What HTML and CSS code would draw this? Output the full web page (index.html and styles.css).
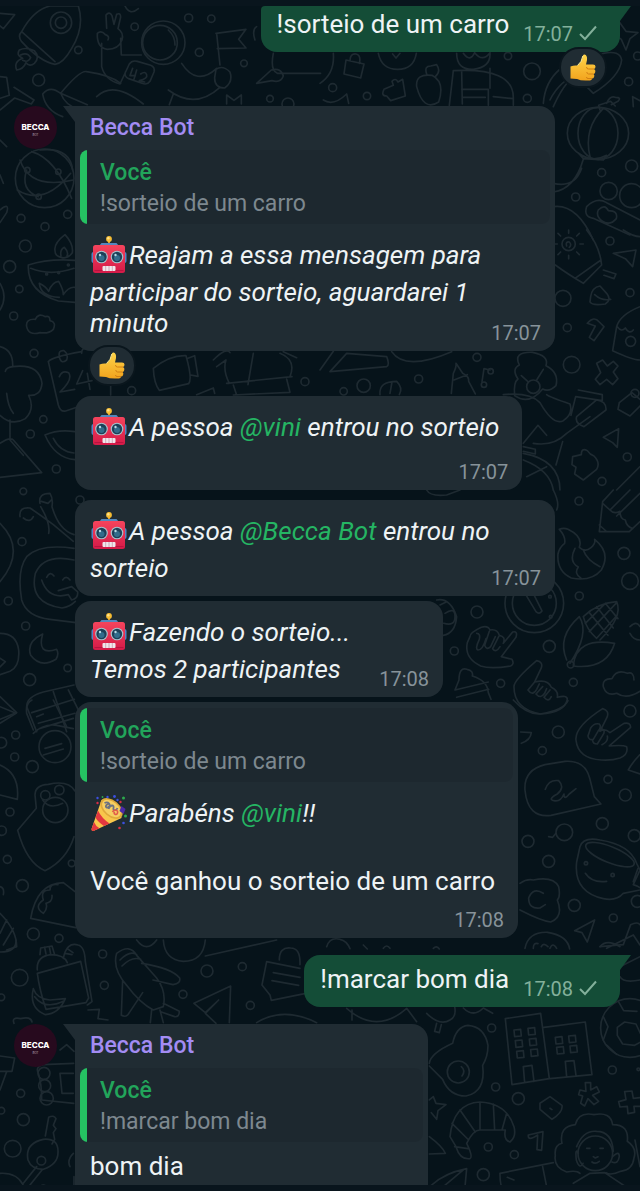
FILE: index.html
```html
<!DOCTYPE html>
<html lang="pt-BR">
	<head>
		<meta charset="utf-8" />
		<meta name="viewport" content="width=device-width, initial-scale=1">
		<title>Becca Bot</title>
		<link rel="stylesheet" href="styles.css">
	</head>
	<body>
		<!-- shared emoji -->
		<svg class="defs" aria-hidden="true">
			<defs>
				<linearGradient id="red" x1="0" y1="0" x2="0" y2="1">
					<stop offset="0" stop-color="#f5445c"/>
					<stop offset="1" stop-color="#d51a48"/>
				</linearGradient>
				<linearGradient id="skin" x1="0" y1="0" x2="0" y2="1">
					<stop offset="0" stop-color="#ffd54a"/>
					<stop offset="1" stop-color="#f2a31d"/>
				</linearGradient>
				<symbol id="robot" viewBox="0 0 38 40">
					<path d="M18.5 4v5" stroke="#d99a2b" stroke-width="2"/>
					<circle cx="18.5" cy="3" r="2.900" fill="#f7bd33"/>
					<circle cx="17.800" cy="2.200" r="1.200" fill="#ffe28a"/>
					<rect x="1" y="16" width="5" height="11" rx="2" fill="#4f83c4"/>
					<rect x="31" y="16" width="5" height="11" rx="2" fill="#4f83c4"/>
					<path d="M9 9.500l2-2.500h15l2 2.500z" fill="#5287bd"/>
					<rect x="2.500" y="9" width="32" height="28" rx="2.500" fill="url(#red)"/>
					<path d="M4 34.500h29" stroke="#b81440" stroke-width="1"/>
					<circle cx="11" cy="21" r="6.300" fill="#a9c3cd"/>
					<circle cx="11" cy="21" r="5.200" fill="#1d4058"/>
					<circle cx="11" cy="22" r="3" fill="#326c8b"/>
					<circle cx="9.500" cy="19" r="1.200" fill="#b9dbe6"/>
					<circle cx="26.500" cy="21" r="6.300" fill="#a9c3cd"/>
					<circle cx="26.500" cy="21" r="5.200" fill="#1d4058"/>
					<circle cx="26.500" cy="22" r="3" fill="#326c8b"/>
					<circle cx="25" cy="19" r="1.200" fill="#b9dbe6"/>
					<rect x="12" y="30" width="13" height="5" rx="1" fill="#f0e7ec"/>
					<path d="M15.200 30v5M18.500 30v5M21.800 30v5" stroke="#c79aad" stroke-width=".8"/>
				</symbol>
				<symbol id="party" viewBox="0 0 38 40">
					<path d="M1 35L11 6C15 3 32 16 31 24L4 36.500Q1 38 1 35z" fill="#f8c64b"/>
					<path d="M7.500 16.500Q11 24 19 29.500L13.500 32Q7 27.500 5 23.500zM3.500 28Q5 32 9 34.200L4 36.500Q1 38 1 35z" fill="#e4383f"/>
					<ellipse cx="21" cy="14.500" rx="13" ry="8" transform="rotate(40 21 14.500)" fill="#e0a93a"/>
					<ellipse cx="21" cy="14.500" rx="11" ry="6.500" transform="rotate(40 21 14.500)" fill="#f6cf62"/>
					<path d="M14 9c4-2 7 2 4 4s-4-2 0-3M18 15c2-5 6-4 5-1s3 3 4 0" fill="none" stroke="#6c7282" stroke-width="1.800"/>
					<path d="M22 18c2-3 6-2 5 1s-4 1-3-1" fill="none" stroke="#e25b4a" stroke-width="1.600"/>
					<path d="M31 12l4 3-2 5-4-3z" fill="#4b29a8"/>
					<g fill="#3c50df">
						<circle cx="7" cy="4" r="1.200"/><circle cx="17" cy="3" r="1.200"/><circle cx="24" cy="2.500" r="1.400"/><circle cx="27" cy="6" r="1.200"/><circle cx="33" cy="29" r="1.300"/>
					</g>
					<g fill="#d72b45">
						<circle cx="7" cy="9" r="1.200"/><circle cx="30" cy="8" r="1.200"/><circle cx="29" cy="34" r="1.300"/>
					</g>
					<g fill="#2cab4d">
						<circle cx="33" cy="4" r="1.500"/><circle cx="35" cy="22" r="1.500"/><circle cx="12" cy="3" r=".9"/>
					</g>
				</symbol>
				<symbol id="thumb" viewBox="0 0 26 27">
					<path d="M.5 12.500Q4 11 7.500 11.500Q12 8 12.800 2Q13 .2 14.500.5Q17.500 1 17 6L16 10.500H23Q25.500 10.500 25.500 12.500T24 15Q25.800 16 25.300 18T23.500 20Q25 21.500 24 23.200T22 24.500Q22 26.500 18.500 26.500Q11 27 7 25L.5 24.500z" fill="url(#skin)"/>
					<path d="M24 15H18.500Q16.500 15 16.500 13M23.500 20H18.500Q17 20 16.800 18M22 24.500H18Q16.500 24.500 16.500 23" fill="none" stroke="#d17f13" stroke-width="1"/>
					<path d="M7.500 11.500Q12 8 12.800 2" fill="none" stroke="#fff09a" stroke-width="1"/>
				</symbol>
				<symbol id="check" viewBox="0 0 20 16">
					<path d="M2 9l5 5L18 1.500" fill="none" stroke="currentColor" stroke-width="2"/>
				</symbol>
			</defs>
		</svg>

		<div class="bar"></div>
		<main class="chat">
			<svg class="wallpaper" viewBox="0 6 640 1179" preserveAspectRatio="xMinYMin slice" aria-hidden="true">
				<!-- rocket, astronaut, globe -->
				<g transform="scale(.3333)">
					<path d="M0 40l44 4-34 42-10-8M65 95Q100 30 150 18H235Q255 80 215 145Q190 190 165 193Q120 185 65 125Q52 108 65 95zM65 95L165 185M50 210q-10-25 18-35q-20-8-10-25q20-10 45 2q18 20 0 38q-14 12-25-2q-8 20-28 22zM62 165q20-10 30 8q-8 16-24 8"/>
					<circle cx="183" cy="68" r="32"/><circle cx="183" cy="68" r="17"/>
					<path d="M320 85L318 45q10-12 18 2l6 26 8-30q12-6 12 8l-8 35q18 12 12 34q-10 28-44 28q-32-4-30-48q12-10 24 4q14 4 8 16M305 130v70q10 40 55 52l28-60q8-12 24-8l40 12q14 6 10 20l-12 28q-8 12-24 6l-40-14q-14-6-10-20M362 115l2 50h60M398 205l-8 22h16M410 210l-8 28M422 222q14-10 18 2t-22 18l16 4"/>
					<circle cx="490" cy="128" r="65"/><circle cx="480" cy="128" r="52"/>
					<path d="M505 90q20 18 20 45M375 18q15 30 40 8M545 190Q590 260 650 205M505 270q80 60 155-8M520 282l-12 32M650 100l10 95M648 100l90-12-22 30 22 26-86 2M648 208q20-14 42 8q10 30-16 48q-30 0-30-30z"/>
					<path d="M182 280Q240 210 260 215Q330 225 362 250M182 280L262 314M290 290Q340 240 430 312M128 282Q150 255 182 280Q196 318 240 330M128 282q8 50 60 68M820 160q-10 50 12 60l130 0M770 250l44-40q30-8 36 18q-8 22-34 14zM770 80q-15 10-5 40"/>
					<circle cx="134" cy="535" r="88"/><path d="M60 480q30 90 160 60M95 455q70 20 120 140M80 510q-20 60 35 80M52 570q80 50 160-50M120 450q90-10 98 60"/><circle cx="82" cy="510" r="8"/><circle cx="175" cy="515" r="8"/><circle cx="116" cy="590" r="8"/>
					<path d="M0 230l20 2 8 54L0 295M42 262l60 38-8 12-50-18-44 36M0 420l20 20M0 525l10 25M0 630q30-25 20 8l-20 30M680 312V285l22 16 22-16v27"/>
					<g>
						<circle cx="566" cy="54" r="12"/><circle cx="634" cy="56" r="11"/><circle cx="404" cy="80" r="11"/><circle cx="235" cy="150" r="11"/><circle cx="116" cy="240" r="18"/><circle cx="598" cy="157" r="12"/><circle cx="732" cy="190" r="10"/><circle cx="810" cy="296" r="10"/><circle cx="864" cy="312" r="18"/><circle cx="63" cy="655" r="12"/><circle cx="135" cy="680" r="12"/><circle cx="203" cy="643" r="12"/>
					</g>
				</g>
				<!-- overalls, lantern, stars -->
				<g transform="translate(320 0) scale(.3333)">
					<path d="M40 160Q45 220 0 250M78 180l54 12-10 42-50-12zM90 182q0-22 18-20q16 4 10 28M175 160q10 48 58 48t56-48M218 162l10 12 12-14M192 268l28-12-4-12q10-12 18 2l14-8 8 50-44 14-12-14q-18 0-8-20zM410 160q0 50 50 48q52-6 50-48M430 160q20 28 34-2q24 30 46 0M400 212q180-10 180 80v24M400 212l-12 104M425 212l2 100M425 268h80v48M510 205v60M430 292h66M520 290l60 6M290 260q-4-40 46-34q40 20 20 80q-46 30-66-46M320 222q-8-24 12-24l18-4q14 20-4 36M10 300q30 20 70-18l6 28"/>
					<path d="M670 310Q680 180 850 160Q900 150 905 180Q900 230 820 280L800 260M690 300Q720 240 780 220M700 320q40-90 90-110M880 100l18-34 20 28 36 4-24 18-12 34-14-32zM940 320l-2-30 22 12"/>
					<ellipse cx="834" cy="400" rx="92" ry="78"/><ellipse cx="834" cy="400" rx="60" ry="78"/><path d="M850 325q-60 60-40 145M840 330l-4-14 36-12 14 14M860 310q10-24 26-18q20 0 8 12l-20 10M776 460q40 30 84 6l-10 14-60-4zM790 478q-26 90-90 98M785 505q-20 60-85 45"/>
					<path d="M800 620q30-30 60-12L960 660M800 620q-10 30 20 35l110 50M835 630q20-20 30 2q30 0 24 24q-20 24-44 6q-18-14-10-32M700 620q70-10 120 100"/>
					<circle cx="636" cy="214" r="25"/><circle cx="622" cy="295" r="12"/><circle cx="564" cy="168" r="11"/><circle cx="38" cy="263" r="12"/><circle cx="141" cy="288" r="11"/><circle cx="926" cy="245" r="12"/><circle cx="953" cy="168" r="12"/><circle cx="935" cy="498" r="18"/><circle cx="845" cy="518" r="12"/><circle cx="767" cy="591" r="12"/><circle cx="866" cy="573" r="26"/><circle cx="935" cy="587" r="36"/>
				</g>
				<!-- bowl, calendar, camera, palm hut -->
				<g transform="translate(0 230) scale(.3333)">
					<path d="M85 105q60-20 140-14M85 105q-4 80 90 108l50 4M92 115q60 24 130 0M118 160q20 10 28 24q10-28 30-30q14 24 14 40q16-24 34-22M118 160q4 40 60 42M165 62q-4-22 30-48q26 28 22 54q-14 20-34 14q-18-4-18-20zM183 78q-4-18 10-26q14 14 8 26M80 290q-4-24 26-22q8-20 30-8q14-4 14 12q20 4 10 26q-14 14-40 10q-34 10-40-18M0 160q24 40 0 80M0 350q40 10 38 60q80-10 88 50q-4 40-40 36q20 40-10 70q-40 24-76-10M40 410q-22 2-24 14M20 490q4 40 20 60M145 395q10-14 100-30M145 395l30 130q6 22 22 18l60-20M178 380q-4-20 14-18q14 10 8 28q-18 14-22-10zM245 370q0-20 16-12M178 440q8-20 28-12q14 20-26 58l44-8M248 422l-18 40 46-10M262 430l8 48M0 640q30-20 40-10l85 98L0 742M30 570v60l40 46M135 615q40-18 90-10M135 615q30 70 90 74M160 625q20 40 62 44"/>
					<path d="M460 415q50-40 98-38q20 70 8 84l-88 20q-16-20-18-66M564 385l20-8 10 62-22-4M640 390q40-40 50-22M650 410l28-20q-10 30 10 70M680 460l196-20M700 465l10 30M760 370l-16 94M840 370q50 20 30 70M700 495l170-8 -10-40M850 365l40 18M590 494l50-20 4 16M332 465v30"/>
					<circle cx="76" cy="48" r="18"/><circle cx="29" cy="110" r="18"/><circle cx="58" cy="177" r="11"/><circle cx="41" cy="258" r="12"/><circle cx="102" cy="370" r="12"/><circle cx="130" cy="568" r="11"/><circle cx="91" cy="612" r="12"/><circle cx="169" cy="717" r="12"/><circle cx="395" cy="482" r="12"/><circle cx="915" cy="455" r="12"/><circle cx="205" cy="105" r="3"/><circle cx="140" cy="132" r="3"/><circle cx="176" cy="128" r="3"/>
				</g>
				<!-- sun, flower, bottle, gift -->
				<g transform="translate(320 230) scale(.3333)">
					<circle cx="746" cy="42" r="20"/><path d="M740 48q-4-14 8-12q8 8 0 16M746 10V0M746 76v10M712 42h-8M780 42h10M722 18l-8-8M770 18l8-8M722 66l-8 8M770 66l8 8M800 0Q840 50 845 105L790 160Q740 130 706 105M765 145l78-55M850 120l38 12-6 14-30-10M880 70l68-10-10 50-22-24zM812 200q4-28 28-32l20 22q16 20-4 32q-40 6-46-6zM824 194q22 20 48 14M802 280q20-24 36-4l14 14-30 42-14-10 18-34zM960 230q-60 24-70 60l-12 72q60 28 82 28M892 290q12 18 24 4q12 20 24 6M910 0q30 20 50 20"/>
					<circle cx="932" cy="334" r="15"/>
					<path d="M830 400l18-10 14 18 18-14 14 14-14 18 14 20-16 18-18-16-20 16-14-16 16-20zM598 405q-20-40 40-38q50 10 40 40q40 20 30 60q-20 20-40 10q-40 50-84 20q-4-40 10-50q-20-30 4-42M650 450l20-32M624 455l-20-18"/><circle cx="640" cy="470" r="20"/>
					<path d="M550 494q80-8 110 24q40 70 70 54q30-20 20-50q-60-20-70-28M775 480l72 14v18l-80-12-14 56M640 640q60 10 100-30l70-50M770 560l60-50q30 4 28 30l-66 50q-28-10-22-30M610 640l44-54 26 30M728 635l-20 70M610 650l36 8v14l-36-8M610 670Q720 690 720 780M610 690q80 30 90 90M620 740l60-30M850 622l46-26-4 56-14-14zM758 680l26-6q0-22 18-12q8 12 20 16q20 20 8 40l-40 32-26-18 4-20-12-8zM898 518l38-30 24 20M898 518l-4 20 36 20 30-30M890 780l70-70M0 420l40-56M30 425l50-55 120 10q10 24 0 30zM215 365q40 60 180 0"/>
					<path d="M400 430q10-20 8-30l20 30q20 10 18 24l20 38M400 430l-6 60M402 450l40-16M510 420l-18-4-6 40"/><circle cx="492" cy="464" r="8"/><circle cx="512" cy="424" r="8"/><path d="M180 494q-4-40 50-40q20 20 8 40M210 490l6-34"/>
					<circle cx="729" cy="205" r="24"/><circle cx="870" cy="33" r="12"/><circle cx="930" cy="188" r="12"/><circle cx="742" cy="293" r="12"/><circle cx="755" cy="404" r="25"/><circle cx="131" cy="467" r="20"/><circle cx="71" cy="484" r="11"/><circle cx="296" cy="447" r="12"/><circle cx="471" cy="382" r="12"/><circle cx="945" cy="490" r="12"/><circle cx="922" cy="681" r="12"/><circle cx="846" cy="754" r="12"/>
				</g>
				<!-- smiley, moon, phone -->
				<g transform="translate(0 490) scale(.3333)">
					<path d="M120 40q-6-30 30-30q10 16 6 40q20 70 66 84M60 80q-4-30 30-26q30 20 70 50l60 50M70 84q20 16 30-4M124 34l20 6 12-12M122 50q30 50 24 80M0 100Q80 180 0 275M222 175Q120 160 80 200Q50 240 65 330Q80 380 150 388L228 398M222 210q-90-20-116 40q-20 90 80 104q24-4 40-20M125 270q20 60 80 44l10 16q20-4 18-24l-18-16-40 12M140 262q10-20 22-4M188 270q10-16 22 0M128 432q-50 24-36 64q30 40 76 12q10-16 2-30q-60 20-42-46zM0 430Q50 430 56 480Q60 530 30 544L0 554M0 505l16 10-16 16M0 620l50 48-50 20M80 650q0-30 50-44L222 585M80 650l30 75M160 605l40 120M95 668l128-40M115 700l110-30M205 600l30 60"/>
					<circle cx="66" cy="155" r="12"/><circle cx="25" cy="333" r="12"/><circle cx="77" cy="408" r="12"/><circle cx="203" cy="534" r="11"/><circle cx="89" cy="569" r="18"/><circle cx="240" cy="30" r="12"/><circle cx="70" cy="4" r="10"/>
				</g>
				<!-- pencil, fire, corn, hands -->
				<g transform="translate(320 490) scale(.3333)">
					<path d="M838 125l10-90L880 0M838 125h90l32-30M870 60q12 14 30 4q0 24 16 26q4 20 22 26M848 40l22 20L930 0M838 105l20 18M890 78l70-68M718 118q14-6 26 0q46 22 34 54q18 16 34 2q16-14 12-26q50 40 20 92q-30 36-90 24q-44-20-40-72q4-20 20-32q4-20-16-42M765 175q-20 40 10 56q-14 20 8 34M790 180q10 30 50 50"/>
					<circle cx="643" cy="340" r="88"/><circle cx="643" cy="340" r="66"/><path d="M612 305l36 60q10 10 18-2l-30-60M700 0q20 40 10 60M320 0q10 20 60 15l40-15"/>
					<path d="M350 330q40-8 60 50q-4 50-40 56M360 345l20-10M375 370q30-20 30 10t-34 20"/>
					<path d="M450 440q0-12 34-28q20-6 26 8q22-4 28 16q20 4 12 24l28-34q16-4 10 16l-44 58 32 8q8 14-4 20q-60 10-90 0q-50-24-40-70zM470 430q12 0 8 18q-14 30-4 32q14 0 24-34M508 424l-14 42q6 16 18 4l14-30M536 440l-18 36q10 14 22-6"/>
					<path d="M790 380Q830 340 890 335Q910 380 840 450M790 380Q800 420 830 445M740 510Q710 440 778 380Q810 430 750 520M760 525Q770 440 884 460Q860 540 760 528M808 368l56 68M830 350l50 64M856 340l38 46M796 400l60-60M808 425l80-85M830 445l62-70"/><circle cx="752" cy="524" r="10"/>
					<path d="M582 590q0-20 68-78q20 4 14 22l-20 42q40-10 50 16q22 10 18 30q30-8 30 6q-8 40-80 44q-80-14-80-82M644 576l-20 24q14 20 26-2l8-16M668 590l-20 22q14 16 26-2l6-14M690 600l-18 22q14 16 22-2M405 600l12-30q0-40 24-32q20 4 16 20q46 14 48 50l8 20M405 600l100-24M410 622l96-24M850 590q-4-24 26-24q14-30 46-16q20-6 20 20M850 590q10 30 40 20q30 20 70-6M930 410q20-20 30 0M930 430q10 20 30 20"/>
					<circle cx="777" cy="33" r="12"/><circle cx="912" cy="190" r="18"/><circle cx="930" cy="273" r="25"/><circle cx="778" cy="318" r="12"/><circle cx="471" cy="366" r="18"/><circle cx="403" cy="483" r="12"/><circle cx="688" cy="469" r="18"/><circle cx="542" cy="580" r="12"/><circle cx="760" cy="577" r="12"/><circle cx="690" cy="320" r="4"/><circle cx="692" cy="380" r="4"/>
				</g>
				<!-- bird, taco -->
				<g transform="translate(0 700) scale(.3333)">
					<path d="M100 90L80 40q-4-30 16-40M160 0l40 80M100 100q30-30 70-24l50 10M110 50l20-8M120 85l100-30M0 20l48 20-48 30M135 145l50-14M130 165l60-18M0 195Q60 220 52 298L0 285M105 285q0-30 40-32q60-14 80 20M105 285l4 40-56 66Q80 490 135 512Q200 480 222 410M128 300q20 30 60 10"/>
					<circle cx="165" cy="140" r="48"/><circle cx="166" cy="330" r="38"/><circle cx="178" cy="270" r="14"/><circle cx="136" cy="286" r="14"/>
					<path d="M92 655Q110 550 190 548L225 575M92 655l135 28M130 640q-30-20 0-40q-10-30 20-30q0-20 24-16M130 640q14-14 8-30q20-4 18-24M0 560q14 4 10 24M0 640Q50 690 50 740L20 750M0 700l20-40M10 735l30-50"/>
					<circle cx="47" cy="105" r="12"/><circle cx="4" cy="128" r="16"/><circle cx="44" cy="171" r="12"/><circle cx="97" cy="200" r="18"/><circle cx="30" cy="336" r="12"/><circle cx="5" cy="392" r="14"/><circle cx="22" cy="478" r="12"/><circle cx="67" cy="557" r="18"/><circle cx="100" cy="702" r="18"/><circle cx="177" cy="715" r="12"/><circle cx="215" cy="490" r="10"/>
				</g>
				<!-- speech bubble, cup, cloud -->
				<g transform="translate(320 700) scale(.3333)">
					<path d="M580 0q40 44 80 42q70-10 84-40M768 120q-4-40 80-94q20 6 14 24l-22 44q14-10 30 4l42-28q20-4 20 12l-64 56q40-4 52 2q6 24-20 34q-24 8-56 6q-70-4-76-60M812 84q10-16 26-12q8 8-4 22l-14 24q-14 4-16-10zM846 86q12 6 2 20l-16 26q-14 0-14-12M862 108q4 16-16 26M925 210q10-20 35-46M925 210l35 12M602 96l32 2q-2 22-30 32M615 270q-4-60 60-76l60-10q60-4 74 50l14 56 20 22-150 34q-70 10-78-76M676 268q10-30 40-26q20 20-4 40q-30 16-10 20t30-20q0 20 16 0l20-16"/>
					<circle cx="733" cy="397" r="25"/><path d="M708 400l-10 12-12-2M780 440q10-30 60-20q90 14 110 70l10 20-20 44q30 10 20 16l-50 10q-20 24-60 16q-90-20-80-110zM940 545l14-40"/><ellipse cx="870" cy="464" rx="78" ry="24" transform="rotate(22 870 464)"/><path d="M796 520q20 30 64 24"/><circle cx="798" cy="490" r="5"/><circle cx="878" cy="525" r="5"/>
					<path d="M600 550q20-14 40-10q60-12 76 20q6 30-4 40q20 50-20 66q-30-4-92-36M670 580q-30-20-44 14q0 34 34 30l16-10M764 692l60-32-22 66-16-28zM615 745q10-50 68-48q60 10 66 50M640 745q0-18 14-14M664 740q6-14 20 0M690 745q8-20 20 0M840 740l70-6 22-60q20-10 28 0M860 745l80-40 20 30M20 740q10-30 40-22q20 4 30 28M130 735l12 12M190 745q10-14 20 0M340 745q10-10 18 2"/>
					<circle cx="715" cy="96" r="18"/><circle cx="930" cy="33" r="18"/><circle cx="667" cy="152" r="12"/><circle cx="864" cy="238" r="12"/><circle cx="916" cy="285" r="18"/><circle cx="847" cy="371" r="18"/><circle cx="943" cy="407" r="18"/><circle cx="624" cy="424" r="18"/><circle cx="686" cy="484" r="18"/><circle cx="763" cy="616" r="18"/><circle cx="952" cy="604" r="18"/><circle cx="880" cy="654" r="12"/>
				</g>
				<!-- backpack, shuttle, paper plane -->
				<g transform="translate(0 940) scale(.3333)">
					<path d="M0 36q50 0 48-36M112 90q-4-40 40-46q40 0 50 24M120 44l2-20 34-6 8 26M134 22l4 20M148 20l4 22M112 100l130-36 24 110-8 14-120 20q-20-60-26-108M190 55q10-50 44-40q20 4 22 50l20 120-14 10M196 40l20 4M205 28l14 10M100 146q10 30 50 34l46-4q-20 46-60 48q-50-20-36-78M104 170q30 40 86 14M350 40q40-30 60 6l60 68q30 40 20 86l-30 10q-40-20-80-74q-44-50-30-96M360 60q30-30 50-16M366 78q30-30 56-20M425 70q90 14 114 44q4 16-20 20l-60-14M368 120l-4 106q16 8 24-8l40-60M490 190l48 24q0 18-14 16l-40-14M480 210l10 38M455 210l-4 38M582 190l110-52-4 110M582 190l34 28 40-38-40 40 32 30M490 0q4 60 60 64q60 0 66-64M616 48L830 0M410 0q30 40 60 0M800 65l100 20M800 65l-14 70 24 30 4 16 100-20M820 98l80 14M816 122l80 14M838 60q0-40 34-36q30 0 28 50M770 248q80-50 180 0M264 210l34-2-4 28 30 4M42 250q-8-20 20-14q30-8 34 10M0 348l44 6-8 40H0M20 395L0 450M180 330l20-16 22 20M115 400q-10-20 14-26l92-4M115 400q10 30 10 80l96 10M180 400h40M180 400l6 60h34"/>
					<circle cx="132" cy="400" r="18"/><circle cx="134" cy="437" r="18"/><circle cx="140" cy="475" r="20"/><path d="M136 588l10-56q16-8 22 4l-8 20 8 10-8 12 4 20-8 14M84 660q-10-50 46-62q46-4 44 40q0 34-44 50q-36 0-46-28M110 680l-40 50M126 690l-40 50M0 700q60-4 76 52"/><circle cx="124" cy="662" r="13"/><path d="M210 680q-10-20 10-40M222 710v40"/>
					<circle cx="308" cy="42" r="12"/><circle cx="59" cy="113" r="25"/><circle cx="313" cy="136" r="12"/><circle cx="549" cy="163" r="12"/><circle cx="621" cy="93" r="18"/><circle cx="727" cy="80" r="12"/><circle cx="751" cy="196" r="12"/><circle cx="62" cy="460" r="12"/><circle cx="70" cy="539" r="18"/><circle cx="38" cy="626" r="25"/><circle cx="4" cy="512" r="10"/><circle cx="130" cy="745" r="10"/><circle cx="4" cy="172" r="10"/>
				</g>
				<!-- egg, buildings, ball, croissant, girl -->
				<g transform="translate(320 940) scale(.3333)">
					<path d="M328 370q4-30 70-60q10-50 46-54q50 4 60 60q0 34-16 60q10 80-50 92q-50 0-70-50l-40-40"/><circle cx="415" cy="396" r="33"/><path d="M424 380q14 12 2 28"/>
					<path d="M556 236l106-16 26 196-112 18zM672 262l124-16 20 158-126 12M614 428l-4-48 26-4 6 48M740 410l-4-46 26-2 6 44M582 270l20-2 2 20-20 2zM624 265l20-2 2 20-20 2zM586 302l20-2 2 20-20 2zM628 297l20-2 2 20-20 2zM590 334l20-2 2 20-20 2zM632 329l20-2 2 20-20 2zM706 292l20-2 2 20-20 2zM746 288l20-2 2 20-20 2zM710 322l20-2 2 20-20 2zM750 318l20-2 2 20-20 2z"/>
					<circle cx="930" cy="264" r="88"/><path d="M892 262l22-16 34 6 14 30M892 286l16 26 36 4 18-10M892 262v24M895 184l16 28 40 2M850 230l14 30-14 40M860 315l30 28M900 80l60-30M900 110q10 20 60 10M840 20q20-24 60 0"/>
					<path d="M390 590Q400 490 480 486Q560 490 582 560Q590 590 570 606Q550 600 556 570L480 570Q460 570 440 610Q460 650 450 656Q420 660 408 620zM480 486v84M420 510l46 66M396 550l50 50M520 492l4 78M560 520l-14 50M404 620l40 6M328 480l12-10 8 20 30 4-24 18-4 26-16-20M660 490l30-20 36 26q4 20-30 42l-36-30zM690 505l6 4M625 585l44-10-4 56-14-2 2-44q-30 20-28 0M780 450l18 4-2-26 16 0 0 22 18-10 8 16-20 10 18 18-14 10-18-18-10 22-12-8 6-22-12-4zM896 485l22-6-4-24 22-2 4 22 20-2M896 485l4 16 22-2 2 22 20-4-2-18h18M328 590q40 30 48 50l-48 2M330 740q40-40 110-54l-6 66M370 740l60-50M540 700L700 668M540 700q0 40 10 50M668 680l14 70M562 712l20 8M0 750q60 10 130-10"/>
					<path d="M780 700q-10-10-40-4q-40-14-34-50q-4-30 20-36q-10-50 40-56q10-40 56-30q50-10 56 30q50 0 44 50q30 20 20 50q-4 36-40 40q-30 14-44 4M775 640q-10-20-6 20q10 30 20 10M878 650q20-20 20 0q-4 24-22 16M770 620q20-50 60-46q46 0 50 60M760 730l50-30 44-2 60 40M945 600l15 80"/><circle cx="826" cy="640" r="52"/><path d="M820 650l6 4 8-4M800 625h10M840 625h10M816 666q10 8 22-2"/>
					<path d="M80 205q90 80 180 0l30 40M96 240V210M320 220q40 40 70 20q20-10 14-40M350 250l-6 24 14 4 6-24M430 204q30 30 60 0l28 16"/>
					<circle cx="515" cy="264" r="12"/><circle cx="527" cy="441" r="12"/><circle cx="595" cy="476" r="18"/><circle cx="877" cy="390" r="12"/><circle cx="505" cy="621" r="12"/><circle cx="583" cy="644" r="12"/><circle cx="490" cy="704" r="18"/><circle cx="955" cy="388" r="4"/>
				</g>
			</svg>

			<div class="row sent">
				<div class="bubble cut-top">
					<div class="body inline">
						<p class="text">!sorteio de um carro</p>
						<span class="time">17:07 <svg class="check"><use href="#check"/></svg></span>
					</div>
				</div>
				<button class="reaction" aria-label="1 reação"><svg class="thumb"><use href="#thumb"/></svg></button>
			</div>

			<div class="row first">
				<div class="avatar"><span class="logo">BECCA</span><span class="logo-sub">BOT</span></div>
				<div class="stack">
					<div class="bubble">
						<div class="name">Becca Bot</div>
						<div class="quote">
							<div class="quote-name">Você</div>
							<div class="quote-text">!sorteio de um carro</div>
						</div>
						<div class="body over">
							<p class="text"><em><svg class="emoji"><use href="#robot"/></svg>Reajam a essa mensagem para participar do sorteio, aguardarei 1 minuto</em></p>
							<span class="time">17:07</span>
						</div>
					</div>
					<button class="reaction" aria-label="1 reação"><svg class="thumb"><use href="#thumb"/></svg></button>
				</div>
			</div>

			<div class="row gap">
				<div class="bubble">
					<div class="body">
						<p class="text"><em><svg class="emoji"><use href="#robot"/></svg>A pessoa <a href="#">@vini</a> entrou no sorteio</em></p>
						<span class="time">17:07</span>
					</div>
				</div>
			</div>

			<div class="row gap">
				<div class="bubble">
					<div class="body over">
						<p class="text"><em><svg class="emoji"><use href="#robot"/></svg>A pessoa <a href="#">@Becca Bot</a> entrou no sorteio</em></p>
						<span class="time">17:07</span>
					</div>
				</div>
			</div>

			<div class="row">
				<div class="bubble">
					<div class="body inline wide">
						<p class="text"><em><svg class="emoji"><use href="#robot"/></svg>Fazendo o sorteio...<br>Temos 2 participantes</em></p>
						<span class="time">17:08</span>
					</div>
				</div>
			</div>

			<div class="row">
				<div class="bubble">
					<div class="quote">
						<div class="quote-name">Você</div>
						<div class="quote-text">!sorteio de um carro</div>
					</div>
					<div class="body">
						<p class="text"><em><svg class="emoji"><use href="#party"/></svg>Parabéns <a href="#">@vini</a>!!</em><br><br>Você ganhou o sorteio de um carro</p>
						<span class="time">17:08</span>
					</div>
				</div>
			</div>

			<div class="row sent next">
				<div class="bubble">
					<div class="body inline">
						<p class="text">!marcar bom dia</p>
						<span class="time">17:08 <svg class="check"><use href="#check"/></svg></span>
					</div>
				</div>
			</div>

			<div class="row first next">
				<div class="avatar"><span class="logo">BECCA</span><span class="logo-sub">BOT</span></div>
				<div class="stack">
					<div class="bubble cut-bottom">
						<div class="name">Becca Bot</div>
						<div class="quote">
							<div class="quote-name">Você</div>
							<div class="quote-text">!marcar bom dia</div>
						</div>
						<div class="body">
							<p class="text">bom dia</p>
						</div>
					</div>
				</div>
			</div>
		</main>
		<div class="bar"></div>
	</body>
</html>
```
FILE: styles.css
```css
*{
	margin: 0;
	padding: 0;
	box-sizing: border-box;
}
body{
	background: #06131a;
	color: #eef3f5;
	font-family: Roboto, "Liberation Sans", sans-serif;
	font-size: 26px;
	line-height: 31px;
}
.defs{
	position: absolute;
	width: 0;
	height: 0;
}
.bar{
	height: 6px;
	background: #09151d;
}
.chat{
	position: relative;
	overflow: hidden;
}
.wallpaper{
	position: absolute;
	top: 0;
	left: 0;
	width: 100%;
	height: 100%;
	fill: none;
	stroke: #1e2a31;
	stroke-width: 5;
	stroke-linejoin: round;
	stroke-linecap: round;
}

/* rows */
.row{
	position: relative;
	display: flex;
	margin-top: 5px;
	padding-left: 75px;
	padding-right: 20px;
}
.row.gap{
	margin-top: 10px;
}
.row.next{
	margin-top: 17px;
}
.row.first{
	gap: 18px;
	margin-top: 19px;
	padding-left: 14px;
}
.row.first.next{
	margin-top: 17px;
}
.row.sent{
	flex-direction: column;
	align-items: flex-end;
}
.row.sent:first-of-type{
	margin-top: 0;
}
.stack{
	display: flex;
	flex-direction: column;
	align-items: flex-start;
}
.avatar{
	display: flex;
	flex-direction: column;
	align-items: center;
	flex: none;
	width: 43px;
	height: 43px;
	padding-top: 16px;
	border-radius: 50%;
	background: #270a1e;
	color: #fff;
	font-family: Inter, sans-serif;
}
.logo{
	font-size: 8px;
	font-weight: 800;
	line-height: 11px;
}
.logo-sub{
	color: #b9a5b3;
	font-size: 3px;
	line-height: 4px;
}

/* bubbles */
.bubble{
	position: relative;
	max-width: 480px;
	border-radius: 16px;
	background: #202c33;
}
.first .bubble{
	border-top-left-radius: 0;
}
.first .bubble::before{
	content: "";
	position: absolute;
	top: 0;
	left: -12px;
	width: 12px;
	height: 16px;
	background: #202c33;
	clip-path: polygon(0 0, 100% 0, 100% 100%);
}
.sent .bubble{
	border-top-right-radius: 0;
	background: #144d37;
}
.sent .bubble::after{
	content: "";
	position: absolute;
	top: 0;
	right: -11px;
	width: 11px;
	height: 15px;
	background: #144d37;
	clip-path: polygon(0 0, 100% 0, 0 100%);
}
.bubble.cut-top{
	border-top-left-radius: 4px;
}
.cut-top .body{
	padding-top: 3px;
}
.bubble.cut-bottom{
	min-width: 353px;
	border-bottom-left-radius: 0;
	border-bottom-right-radius: 0;
}
.cut-bottom .body{
	padding-bottom: 3px;
}
.name{
	padding: 8px 15px 9px;
	color: #a38cf3;
	font-size: 23px;
	font-weight: 500;
	line-height: 27px;
}
.quote{
	margin: 0 5px;
	padding: 7px 20px 5px;
	border-radius: 8px;
	background: linear-gradient(to right, #25c262 7px, #1d282f 7px);
	font-size: 23px;
	line-height: 31px;
}
.bubble > .quote:first-child{
	margin-top: 6px;
}
.quote-name{
	color: #22a55b;
	font-weight: 500;
}
.quote-text{
	color: #7d888f;
}
.body{
	display: flex;
	flex-direction: column;
	padding: 9px 14px 8px 15px;
}
.text{
	padding-right: 9px;
}
.text a{
	color: #25b563;
	text-decoration: none;
}
.time{
	align-self: flex-end;
	margin-top: 13px;
	color: #87939a;
	font-size: 20px;
	line-height: 20px;
	white-space: nowrap;
}
.over{
	display: grid;
}
.over .text,
.over .time{
	grid-area: 1 / 1;
}
.over .time{
	align-self: end;
	justify-self: end;
}
.inline{
	flex-direction: row;
	align-items: flex-end;
	gap: 14px;
}
.inline .time{
	align-self: auto;
	margin-top: 0;
}
.inline.wide{
	gap: 29px;
}
.over .text,
.inline .text{
	padding-right: 0;
	padding-bottom: 4px;
}
.sent .body{
	padding-left: 16px;
	padding-right: 22px;
}
.sent .time{
	color: #83b09b;
}
.emoji{
	width: 39px;
	height: 40px;
	margin-top: 3px;
	margin-bottom: 1px;
	vertical-align: -13px;
}
.check{
	width: 20px;
	height: 16px;
}
.reaction{
	position: relative;
	display: flex;
	align-items: center;
	justify-content: center;
	width: 48px;
	height: 41px;
	margin-top: -6px;
	margin-left: 13px;
	border: 2px solid #0a161d;
	border-radius: 20px;
	background: #202c33;
}
.sent .reaction{
	margin-top: -5px;
	margin-right: 13px;
	margin-bottom: -1px;
}
.thumb{
	width: 26px;
	height: 27px;
}
```
